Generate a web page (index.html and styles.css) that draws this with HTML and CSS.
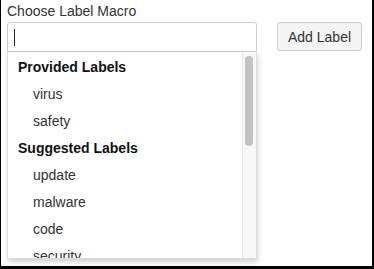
FILE: index.html
```html
<!DOCTYPE html>
<html lang="en">
<head>
  <meta charset="UTF-8" />
  <title>Choose Label Macro</title>
  <link rel="stylesheet" href="styles.css">
</head>
<body>

<div class="frame">
  <div class="macro-form">
    <label class="field-label" for="macroInput">Choose Label Macro</label>

    <div class="field-row">
      <div class="combo">
        <div class="combo-input" id="macroInput"><span class="caret"></span></div>

        <!-- выпадающий список -->
        <div class="menu">
          <div class="menu-list">
            <div class="group-title">Provided Labels</div>
            <div class="option">virus</div>
            <div class="option">safety</div>
            <div class="group-title">Suggested Labels</div>
            <div class="option">update</div>
            <div class="option">malware</div>
            <div class="option">code</div>
            <div class="option">security</div>
          </div>
          <div class="scrollbar"><div class="thumb"></div></div>
        </div>
      </div>

      <button class="add-btn">Add Label</button>
    </div>
  </div>
</div>

</body>
</html>
```

FILE: styles.css
```css
* {
  box-sizing: border-box;
}

body {
  margin: 0;
  font-family: "Liberation Sans", Arial, sans-serif;
  color: #333;
  background: white;
}

.frame {
  width: 374px;
  height: 269px;
  border-style: solid;
  border-color: #000;
  border-width: 0 2px 3px 1px;
  overflow: hidden;
}

.macro-form {
  padding: 3px 0 0 6px;
}

.field-label {
  display: block;
  font-size: 14px;
  line-height: 17px;
  margin-bottom: 2px;
}

.field-row {
  display: flex;
  align-items: flex-start;
  gap: 20px;
}

.combo {
  width: 250px;
}

.combo-input {
  height: 30px;
  border: 1px solid #ccc;
  border-radius: 3px 3px 0 0;
  display: flex;
  align-items: center;
  padding-left: 6px;
}

.caret {
  width: 1px;
  height: 17px;
  background: #222;
}

.menu {
  display: flex;
  height: 207px;
  border: 1px solid #ddd;
  border-top: none;
  box-shadow: 1px 3px 5px rgba(0,0,0,0.18);
}

.menu-list {
  flex: 1;
  overflow: hidden;
  padding-top: 2px;
}

.group-title {
  font-weight: bold;
  font-size: 14px;
  line-height: 27px;
  padding-left: 10px;
  color: #111;
}

.option {
  font-size: 14px;
  line-height: 27px;
  padding-left: 25px;
}

.scrollbar {
  width: 14px;
  background: #f8f8f8;
  border-left: 1px solid #e8e8e8;
  padding: 4px 3px 0 2px;
}

.thumb {
  height: 90px;
  background: #c2c2c2;
  border-radius: 4px;
}

.add-btn {
  height: 29px;
  padding: 0 10px;
  font-family: "Liberation Sans", Arial, sans-serif;
  font-size: 14px;
  color: #333;
  background: #f5f5f5;
  border: 1px solid #ccc;
  border-radius: 3px;
}
```
